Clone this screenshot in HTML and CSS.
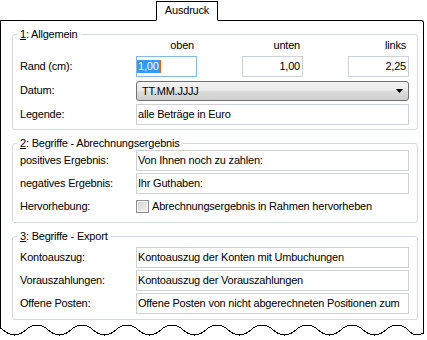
FILE: index.html
```html
<!DOCTYPE html>
<html lang="de">
<head>
<meta charset="utf-8">
<title>Ausdruck</title>
<link rel="stylesheet" href="styles.css">
</head>
<body>
<div class="window">
  <div class="tabstrip"><div class="tab">Ausdruck</div></div>
  <div class="panel">
    <section class="group g1">
      <div class="legend"><u>1</u>: Allgemein</div>
      <div class="head">
        <span class="label"></span>
        <div class="triple"><span>oben</span><span>unten</span><span>links</span></div>
      </div>
      <div class="row first">
        <span class="label">Rand (cm):</span>
        <div class="triple">
          <div class="field num focus"><span class="sel">1,00</span><span class="caret"></span></div>
          <div class="field num">1,00</div>
          <div class="field num">2,25</div>
        </div>
      </div>
      <div class="row">
        <span class="label">Datum:</span>
        <div class="select"><span>TT.MM.JJJJ</span><svg class="arrow" width="7" height="4" viewBox="0 0 7 4"><path d="M0 0H7L3.5 4Z" fill="#000"/></svg></div>
      </div>
      <div class="row">
        <span class="label">Legende:</span>
        <div class="field">alle Beträge in Euro</div>
      </div>
    </section>

    <section class="group g2">
      <div class="legend"><u>2</u>: Begriffe - Abrechnungsergebnis</div>
      <div class="row first">
        <span class="label">positives Ergebnis:</span>
        <div class="field">Von Ihnen noch zu zahlen:</div>
      </div>
      <div class="row">
        <span class="label">negatives Ergebnis:</span>
        <div class="field">Ihr Guthaben:</div>
      </div>
      <div class="row">
        <span class="label">Hervorhebung:</span>
        <div class="checkline"><span class="check"></span><span>Abrechnungsergebnis in Rahmen hervorheben</span></div>
      </div>
    </section>

    <section class="group g3">
      <div class="legend"><u>3</u>: Begriffe - Export</div>
      <div class="row first">
        <span class="label">Kontoauszug:</span>
        <div class="field">Kontoauszug der Konten mit Umbuchungen</div>
      </div>
      <div class="row">
        <span class="label">Vorauszahlungen:</span>
        <div class="field">Kontoauszug der Vorauszahlungen</div>
      </div>
      <div class="row">
        <span class="label">Offene Posten:</span>
        <div class="field">Offene Posten von nicht abgerechneten Positionen zum</div>
      </div>
    </section>
  </div>
  <svg class="tear" width="424" height="18" viewBox="0 0 424 18" shape-rendering="crispEdges">
    <path fill="none" stroke="#000" stroke-width="1" d="M0.5,0 V6 L3.25,8 Q14.5,18 25.75,8 T48.25,8 T70.75,8 T93.25,8 T115.75,8 T138.25,8 T160.75,8 T183.25,8 T205.75,8 T228.25,8 T250.75,8 T273.25,8 T295.75,8 T318.25,8 T340.75,8 T363.25,8 T385.75,8 T408.25,8 Q415,16 423.5,11 V0"/>
  </svg>
</div>
</body>
</html>
```

FILE: styles.css
```css
* {
  box-sizing: border-box;
}

body {
  margin: 0;
  background: #fff;
  color: #000;
  font: 11px/13px "Liberation Sans", Arial, sans-serif;
  letter-spacing: -0.2px;
}

.window {
  width: 424px;
}

.tabstrip {
  height: 20px;
  padding-left: 156px;
  display: flex;
}

.tab {
  width: 62px;
  height: 20px;
  margin-top: 1px;
  border: 1px solid #000;
  border-bottom: 1px solid #fff;
  background: #fff;
  position: relative;
  z-index: 1;
  text-align: center;
  line-height: 17px;
}

.panel {
  border: 1px solid #000;
  border-bottom: 0;
  border-top-right-radius: 3px;
  padding: 13px 5px 2px 11px;
}

.tear {
  display: block;
}

.group {
  border: 1px solid #d3d9df;
  border-radius: 3px;
  padding: 0 8px 4px 7px;
}

.g2,
.g3 {
  margin-top: 13px;
  padding-bottom: 5px;
}

.legend {
  width: max-content;
  margin: -7px 0 0 -3px;
  padding: 0 3px;
  background: #fff;
  line-height: 13px;
}

.head {
  display: flex;
  height: 13px;
  margin-top: -2px;
}

.row {
  display: flex;
  align-items: center;
  height: 21px;
  margin-top: 2px;
}

.g1 .row {
  margin-top: 3px;
}

.g1 .row.first {
  margin-top: 4px;
}

.g2 .row.first {
  margin-top: 0;
}

.g3 .row.first {
  margin-top: 4px;
}

.label {
  width: 116px;
  flex: none;
}

.triple {
  width: 273px;
  display: flex;
  justify-content: space-between;
}

.triple > span {
  width: 61px;
  text-align: right;
  padding-right: 3px;
}

.field {
  width: 273px;
  height: 21px;
  border: 1px solid #cdd2d7;
  padding: 0 2px 0 1px;
  line-height: 19px;
  white-space: nowrap;
  overflow: hidden;
  background: #fff;
}

.field.num {
  width: 61px;
  text-align: right;
  padding-right: 2px;
}

.field.focus {
  border-color: #86b8e8;
  text-align: left;
  padding: 0;
  display: flex;
  align-items: center;
}

.sel {
  background: #3399ff;
  color: #fff;
  line-height: 13px;
  padding: 0 1px;
}

.caret {
  width: 1px;
  height: 13px;
  background: #d86a00;
}

.select {
  width: 273px;
  height: 20px;
  align-self: flex-end;
  border: 1px solid #707070;
  border-radius: 3px;
  background: linear-gradient(#f3f3f3, #e9e9e9 50%, #dcdcdc 51%, #d0d0d0);
  padding: 0 5px 0 5px;
  display: flex;
  align-items: center;
  justify-content: space-between;
}

.arrow {
  display: block;
}

.checkline {
  display: flex;
  align-items: center;
}

.check {
  width: 13px;
  height: 13px;
  margin-right: 3px;
  border: 1px solid #8e8f8f;
  box-shadow: inset 0 0 0 1px #f4f4f4;
  background: linear-gradient(135deg, #cfcfcf, #f7f7f7);
}
```
